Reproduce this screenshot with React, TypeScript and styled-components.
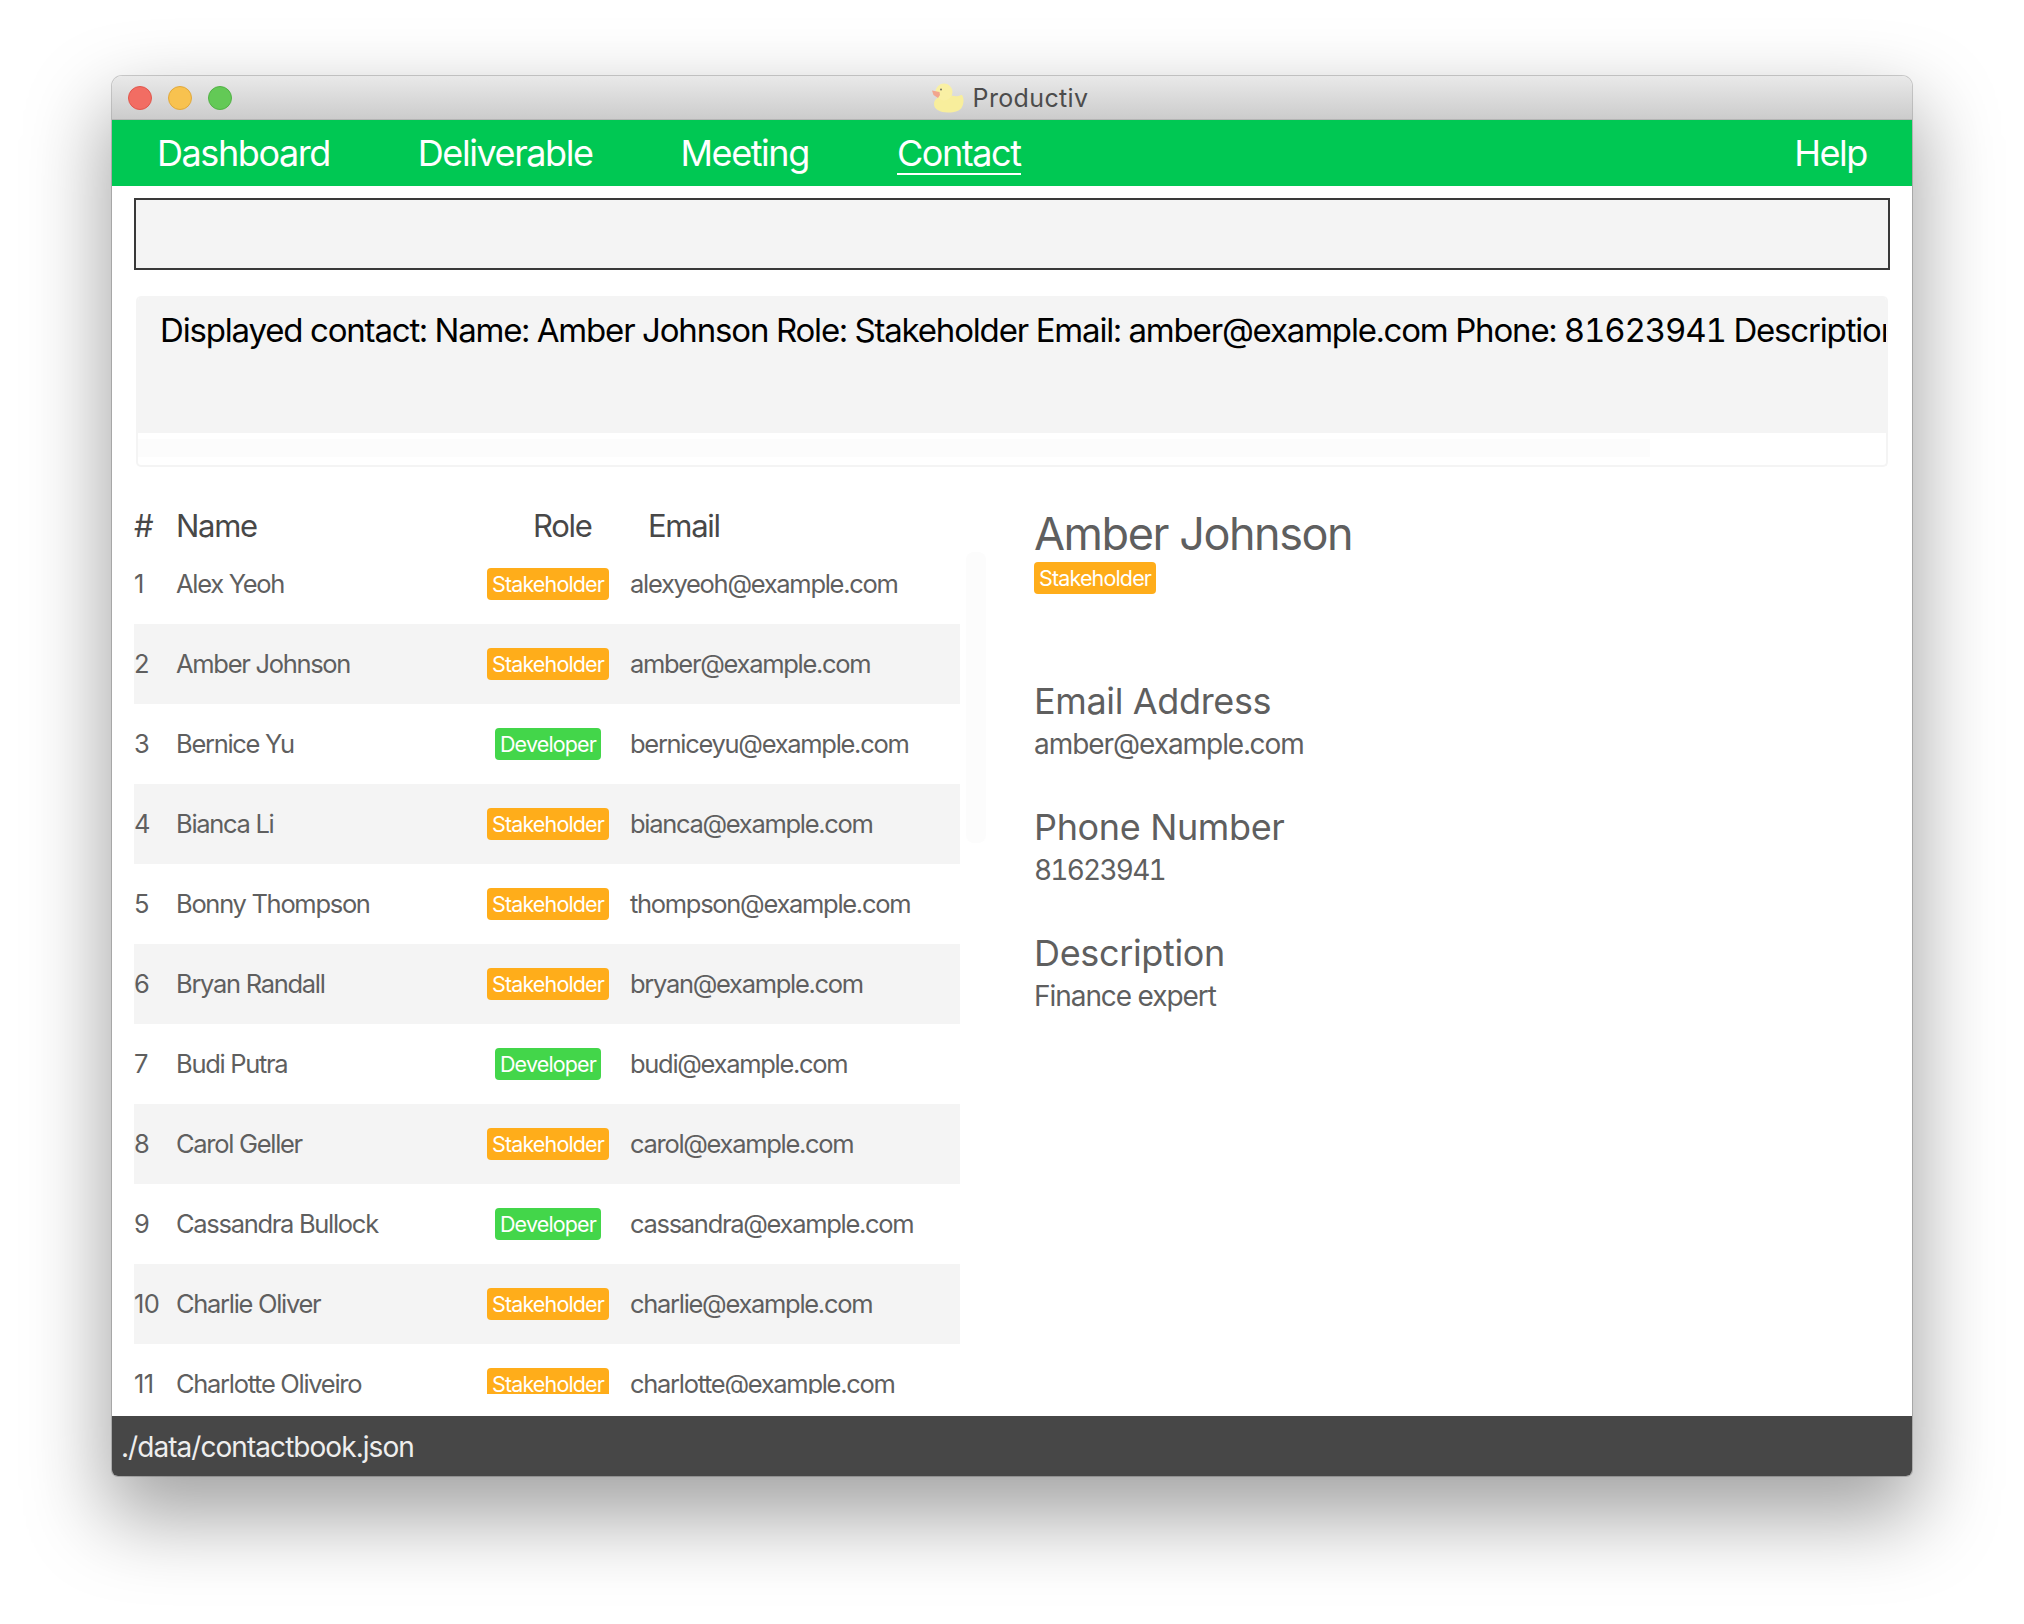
import React from "react";
import styled, { createGlobalStyle } from "styled-components";

const GlobalStyle = createGlobalStyle`
  html, body {
    margin: 0;
    padding: 0;
    background: #ffffff;
  }
  body {
    width: 2024px;
    height: 1624px;
    overflow: hidden;
    font-family: Inter, "Liberation Sans", sans-serif;
  }
`;

const Page = styled.div`
  padding: 76px 0 0 112px;
`;

const Window = styled.div`
  width: 1800px;
  height: 1400px;
  display: flex;
  flex-direction: column;
  background: #ffffff;
  border-radius: 10px 10px 6px 6px;
  overflow: hidden;
  box-shadow: 0 0 0 1px rgba(0, 0, 0, 0.18), 0 36px 80px 6px rgba(0, 0, 0, 0.36);
`;

const TitleBar = styled.div`
  height: 44px;
  flex: none;
  position: relative;
  display: flex;
  align-items: center;
  justify-content: center;
  gap: 8px;
  padding-right: 4px;
  background: linear-gradient(#e9e9e9, #cccccc);
  border-bottom: 1px solid #b4b4b4;
  box-sizing: border-box;
`;

const Lights = styled.div`
  position: absolute;
  left: 16px;
  top: 10px;
  display: flex;
  gap: 16px;
`;

const Light = styled.span<{ $color: string; $edge: string }>`
  width: 24px;
  height: 24px;
  box-sizing: border-box;
  border-radius: 50%;
  background: ${(p) => p.$color};
  border: 1px solid ${(p) => p.$edge};
`;

const TitleText = styled.span`
  font-size: 25px;
  color: #4c4c4c;
  letter-spacing: 0.35px;
`;

const MenuBar = styled.nav`
  height: 66px;
  flex: none;
  box-sizing: border-box;
  display: flex;
  align-items: center;
  gap: 88px;
  padding: 2px 45px 0 45px;
  background: #00c853;
`;

const MenuItem = styled.span<{ $active?: boolean }>`
  font-size: 36px;
  line-height: 40px;
  letter-spacing: -1.43px;
  color: #ffffff;
  border-bottom: 2px solid ${(p) => (p.$active ? "#ffffff" : "transparent")};
  &:last-child {
    margin-left: auto;
  }
`;

const Content = styled.main`
  flex: 1;
  min-height: 0;
  display: flex;
  flex-direction: column;
  padding: 12px 22px 0 22px;
`;

const CommandBox = styled.div`
  height: 72px;
  flex: none;
  box-sizing: border-box;
  background: #f4f4f4;
  border: 2px solid #393939;
`;

const ResultBox = styled.div`
  height: 171px;
  flex: none;
  box-sizing: border-box;
  margin: 26px 2px 0 2px;
  display: flex;
  flex-direction: column;
  border: 2px solid #f4f4f4;
  border-top: 0;
  border-radius: 5px;
  overflow: hidden;
`;

const ResultText = styled.div`
  height: 137px;
  flex: none;
  box-sizing: border-box;
  padding: 12px 0 0 22px;
  background: #f4f4f4;
  color: #000000;
  font-size: 33px;
  line-height: 44px;
  letter-spacing: -1.17px;
  font-variant-numeric: tabular-nums;
  white-space: nowrap;
  overflow: hidden;
`;

const ScrollTrack = styled.div`
  flex: 1;
  padding: 6px 0 8px 0;
`;

const ScrollThumb = styled.div`
  width: 1512px;
  height: 100%;
  background: #fcfcfc;
`;

const Panes = styled.div`
  flex: 1;
  min-height: 0;
  display: flex;
  padding-top: 40px;
`;

const ListPane = styled.section`
  width: 826px;
  flex: none;
  position: relative;
`;

const ListScrollThumb = styled.div`
  position: absolute;
  left: 832px;
  top: 45px;
  width: 20px;
  height: 291px;
  border-radius: 8px;
  background: #fcfcfc;
`;

const HeaderRow = styled.div`
  height: 37px;
  display: grid;
  grid-template-columns: 42px 357px 115px 1fr;
  align-items: center;
  color: #484848;
  font-size: 31px;
  letter-spacing: -1.3px;
`;

const ListBody = styled.div`
  height: 850px;
  overflow: hidden;
`;

const Row = styled.div<{ $alt: boolean }>`
  height: 80px;
  box-sizing: border-box;
  padding-bottom: 2px;
  display: grid;
  grid-template-columns: 42px 311px 122px 1fr;
  align-items: center;
  background: ${(p) => (p.$alt ? "#f4f4f4" : "#ffffff")};
  color: #5f5f5f;
  font-size: 25.5px;
  letter-spacing: -1.3px;
  white-space: nowrap;
`;

const IndexCell = styled.span`
  letter-spacing: -0.6px;
`;

const RoleCell = styled.div`
  display: flex;
  justify-content: center;
  padding-top: 2px;
`;

const EmailCell = styled.div`
  padding-left: 21px;
`;

const Badge = styled.span<{ $role: string }>`
  display: inline-block;
  height: 32px;
  box-sizing: border-box;
  padding: 0 5px;
  border-radius: 4px;
  background: ${(p) => (p.$role === "Developer" ? "#43d64a" : "#ffad1a")};
  color: #ffffff;
  font-size: 21.5px;
  line-height: 32px;
  letter-spacing: -0.85px;
`;

const DetailPane = styled.section`
  flex: 1;
  padding-left: 74px;
`;

const DetailName = styled.h1`
  margin: 0;
  font-size: 45px;
  font-weight: 400;
  line-height: 53px;
  letter-spacing: -1.45px;
  color: #5f5f5f;
`;

const DetailBadgeRow = styled.div`
  height: 32px;
  display: flex;
  margin-top: 2px;
  margin-bottom: 83px;
`;

const Field = styled.div`
  height: 126px;
`;

const FieldLabel = styled.div`
  font-size: 36px;
  line-height: 48px;
  letter-spacing: -0.35px;
  color: #5f5f5f;
`;

const FieldValue = styled.div<{ $digits?: boolean }>`
  font-size: 28px;
  line-height: 38px;
  letter-spacing: ${(p) => (p.$digits ? "-1.8px" : "-1.05px")};
  font-variant-numeric: tabular-nums;
  color: #5f5f5f;
`;

const StatusBar = styled.footer`
  height: 60px;
  flex: none;
  box-sizing: border-box;
  display: flex;
  align-items: center;
  padding: 1px 0 0 9px;
  background: #474747;
  color: #eeeeee;
  font-size: 28px;
  letter-spacing: -0.95px;
`;

const contacts = [
  { name: "Alex Yeoh", role: "Stakeholder", email: "alexyeoh@example.com" },
  { name: "Amber Johnson", role: "Stakeholder", email: "amber@example.com" },
  { name: "Bernice Yu", role: "Developer", email: "berniceyu@example.com" },
  { name: "Bianca Li", role: "Stakeholder", email: "bianca@example.com" },
  { name: "Bonny Thompson", role: "Stakeholder", email: "thompson@example.com" },
  { name: "Bryan Randall", role: "Stakeholder", email: "bryan@example.com" },
  { name: "Budi Putra", role: "Developer", email: "budi@example.com" },
  { name: "Carol Geller", role: "Stakeholder", email: "carol@example.com" },
  { name: "Cassandra Bullock", role: "Developer", email: "cassandra@example.com" },
  { name: "Charlie Oliver", role: "Stakeholder", email: "charlie@example.com" },
  { name: "Charlotte Oliveiro", role: "Stakeholder", email: "charlotte@example.com" },
];

const Duck = () => (
  <svg width="33" height="30" viewBox="0 0 33 30">
    <path d="M2 21c0-5 5-9 13-9 5 0 9 2 11 1 2-.5 3-1 4-1 2 3 2 8 0 12-2 4-7 5.500-14 5.500C8 29.500 2 26.500 2 21z" fill="#f8ee9c" />
    <circle cx="12" cy="9" r="8.500" fill="#f9f0a4" />
    <path d="M0 7.500 7.500 9 8 12 6 15 1.500 12z" fill="#f2a58e" />
    <circle cx="9" cy="6.500" r="1" fill="#6f6f60" />
  </svg>
);

const App = () => {
  return (
    <Page>
      <GlobalStyle />
      <Window>
        <TitleBar>
          <Lights>
            <Light $color="#f26d63" $edge="#e0574d" />
            <Light $color="#f8c24f" $edge="#e0a83c" />
            <Light $color="#63c956" $edge="#52b146" />
          </Lights>
          <Duck />
          <TitleText>Productiv</TitleText>
        </TitleBar>
        <MenuBar>
          <MenuItem>Dashboard</MenuItem>
          <MenuItem>Deliverable</MenuItem>
          <MenuItem>Meeting</MenuItem>
          <MenuItem $active>Contact</MenuItem>
          <MenuItem>Help</MenuItem>
        </MenuBar>
        <Content>
          <CommandBox />
          <ResultBox>
            <ResultText>
              Displayed contact: Name: Amber Johnson Role: Stakeholder Email: amber@example.com Phone: 81623941 Description: Finance expert
            </ResultText>
            <ScrollTrack>
              <ScrollThumb />
            </ScrollTrack>
          </ResultBox>
          <Panes>
            <ListPane>
              <HeaderRow>
                <span>#</span>
                <span>Name</span>
                <span>Role</span>
                <span>Email</span>
              </HeaderRow>
              <ListBody>
                {contacts.map((c, i) => (
                  <Row key={c.name} $alt={i % 2 === 1}>
                    <IndexCell>{i + 1}</IndexCell>
                    <span>{c.name}</span>
                    <RoleCell>
                      <Badge $role={c.role}>{c.role}</Badge>
                    </RoleCell>
                    <EmailCell>{c.email}</EmailCell>
                  </Row>
                ))}
              </ListBody>
              <ListScrollThumb />
            </ListPane>
            <DetailPane>
              <DetailName>Amber Johnson</DetailName>
              <DetailBadgeRow>
                <Badge $role="Stakeholder">Stakeholder</Badge>
              </DetailBadgeRow>
              <Field>
                <FieldLabel>Email Address</FieldLabel>
                <FieldValue>amber@example.com</FieldValue>
              </Field>
              <Field>
                <FieldLabel>Phone Number</FieldLabel>
                <FieldValue $digits>81623941</FieldValue>
              </Field>
              <Field>
                <FieldLabel>Description</FieldLabel>
                <FieldValue>Finance expert</FieldValue>
              </Field>
            </DetailPane>
          </Panes>
        </Content>
        <StatusBar>./data/contactbook.json</StatusBar>
      </Window>
    </Page>
  );
};

export default App;
